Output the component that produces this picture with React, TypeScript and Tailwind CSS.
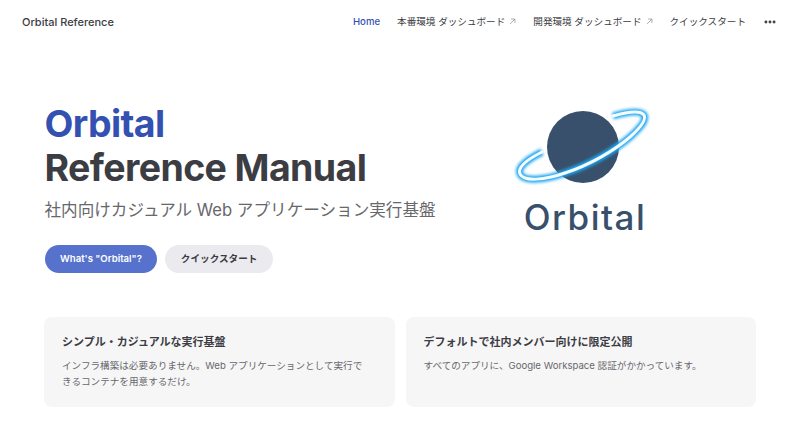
import { MoreHorizontal } from 'lucide-react';

const font = 'font-["Inter","Noto_Sans_CJK_JP",sans-serif]';

const Arrow = () => (
  <svg viewBox="0 0 10 10" className="ml-[4px] h-[7px] w-[7px] text-[#8a8a90]" fill="none" stroke="currentColor" strokeWidth="1">
    <path d="M1.5 8.5 8.5 1.5M3 1.5h5.5V7" />
  </svg>
);

const ring =
  'M542 152C526 160 517 168 520 174C524 182 545 180 565 173C590 165 615 150 630 137C640 128 647 120 644 115C640 110 627 112 613 116';

const Logo = () => (
  <svg viewBox="510 105 150 85" className="h-[85px] w-[150px]">
    <defs>
      <filter id="glow" x="-20%" y="-30%" width="140%" height="160%">
        <feGaussianBlur stdDeviation="1.8" />
      </filter>
    </defs>
    <circle cx="583" cy="147" r="36" fill="#38506b" />
    <path d={ring} fill="none" stroke="#1fa4f0" strokeWidth="7" filter="url(#glow)" />
    <path d={ring} fill="none" stroke="#f4fdff" strokeWidth="3" strokeLinecap="round" />
  </svg>
);

export default function App() {
  return (
    <div className={`h-[435px] w-[800px] overflow-hidden bg-white ${font}`}>
      <header className="flex h-[44px] items-center justify-between pl-[22px] pr-[23px]">
        <span className="text-[11px] font-medium text-[#3c3c43]">Orbital Reference</span>
        <nav className="flex items-center gap-[17px] text-[9.6px] font-normal text-[#3c3c43]">
          <span className="font-medium text-[#3451b2]">Home</span>
          <span className="flex items-center">本番環境 ダッシュボード<Arrow /></span>
          <span className="flex items-center">開発環境 ダッシュボード<Arrow /></span>
          <span>クイックスタート</span>
          <MoreHorizontal className="h-[14px] w-[14px]" strokeWidth={3} />
        </nav>
      </header>
      <main className="px-[44px] pt-[58px]">
        <section className="flex justify-between">
          <div className="pl-[0.5px]">
            <h1 className="text-[37.5px] font-bold leading-[44px] tracking-[-0.62px] text-[#3451b2]">Orbital</h1>
            <p className="text-[37.5px] font-bold leading-[44px] tracking-[-0.62px] text-[#3c3c43]">Reference Manual</p>
            <p className="mt-[8px] text-[16.6px] leading-[24px] text-[#67676c]">社内向けカジュアル Web アプリケーション実行基盤</p>
            <div className="mt-[23px] flex gap-[8px] text-[9.6px] font-semibold">
              <span className="flex h-[28px] items-center rounded-full bg-[#5672cd] px-[15.5px] text-white">What's "Orbital"?</span>
              <span className="flex h-[28px] items-center rounded-full bg-[#ebebef] px-[15.5px] text-[#3c3c43]">クイックスタート</span>
            </div>
          </div>
          <div className="mr-[96px] flex flex-col items-center pt-[3px]">
            <Logo />
            <span className="mt-[7px] text-[35px] font-medium leading-[40px] tracking-[1.5px] text-[#38506b]">Orbital</span>
          </div>
        </section>
        <section className="mt-[44px] grid grid-cols-2 gap-[11px]">
          <div className="h-[90px] rounded-lg bg-[#f6f6f7] pl-[18px] pr-[24px] pt-[17px]">
            <h2 className="text-[11px] font-semibold leading-[16px] text-[#3c3c43]">シンプル・カジュアルな実行基盤</h2>
            <p className="mt-[8px] text-[9.6px] leading-[16px] text-[#67676c]">インフラ構築は必要ありません。Web アプリケーションとして実行できるコンテナを用意するだけ。</p>
          </div>
          <div className="h-[90px] rounded-lg bg-[#f6f6f7] pl-[18px] pr-[24px] pt-[17px]">
            <h2 className="text-[11px] font-semibold leading-[16px] text-[#3c3c43]">デフォルトで社内メンバー向けに限定公開</h2>
            <p className="mt-[8px] text-[9.6px] leading-[16px] text-[#67676c]">すべてのアプリに、Google Workspace 認証がかかっています。</p>
          </div>
        </section>
      </main>
    </div>
  );
}
